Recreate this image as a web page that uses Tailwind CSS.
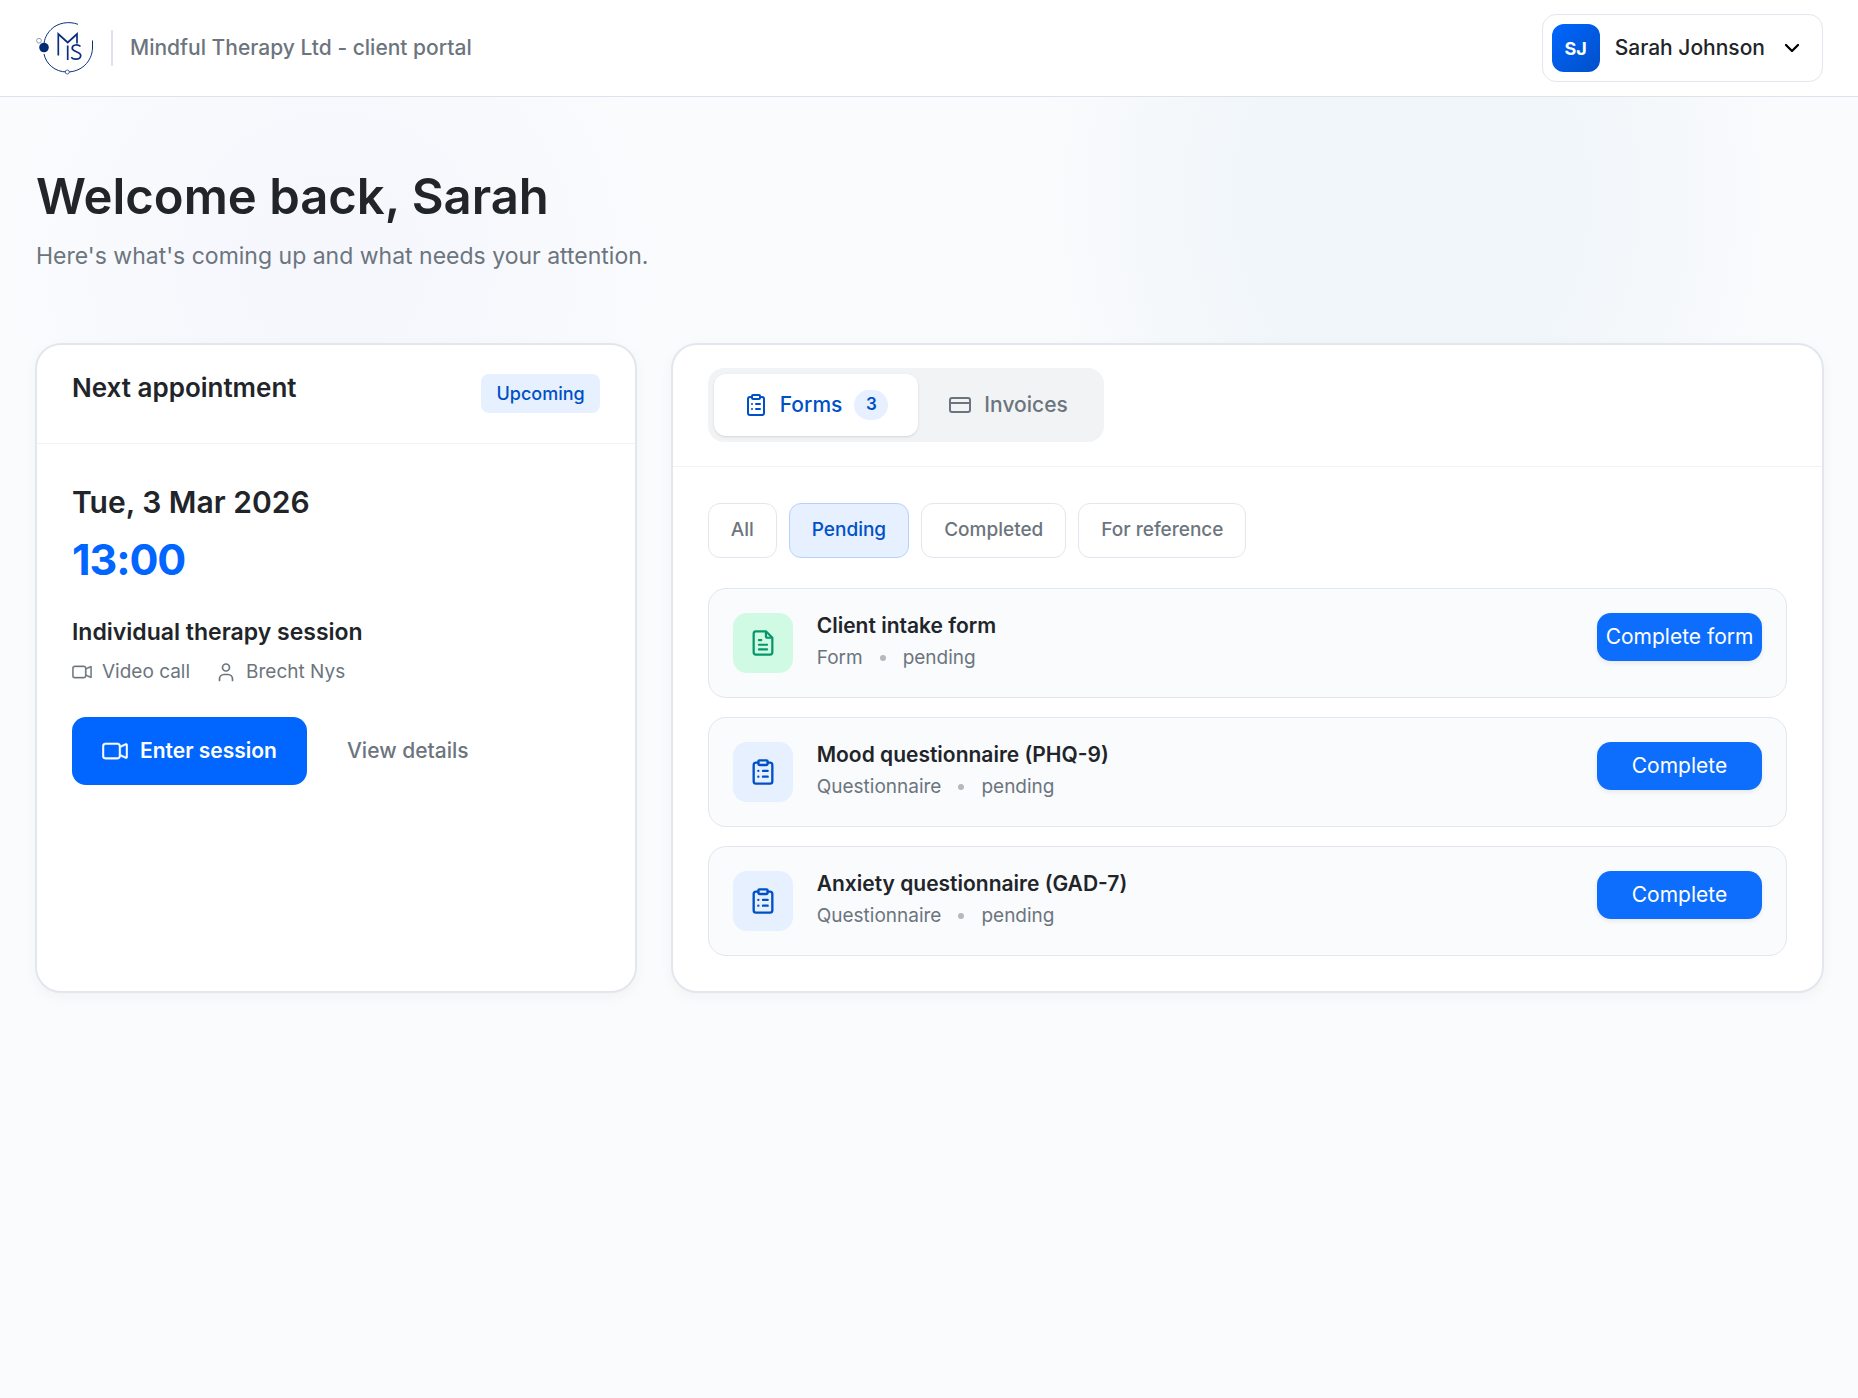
<!DOCTYPE html>
<html lang="en">
<head>
<meta charset="utf-8">
<meta name="viewport" content="width=device-width, initial-scale=1">
<title>Mindful Therapy Ltd - client portal</title>
<script src="https://cdn.jsdelivr.net/npm/@tailwindcss/browser@4"></script>
</head>
<body class="min-h-screen bg-[#fafbfd] font-['Inter',sans-serif] text-[#212529]">
<svg class="hidden" aria-hidden="true">
  <symbol id="video" viewBox="0 0 16 16" fill="currentColor" stroke="currentColor" stroke-width="0.300"><path fill-rule="evenodd" d="M0.200 5a2 2 0 0 1 2-2h7.300a2 2 0 0 1 1.983 1.738l3.110-1.382A.9 .9 0 0 1 15.800 4.269v7.462a.9 .9 0 0 1-1.206.913l-3.111-1.382A2 2 0 0 1 9.500 13H2.200a2 2 0 0 1-2-2zm11.300 5.175 3.300 1.456V4.369l-3.300 1.456zM2.200 4a1 1 0 0 0-1 1v6a1 1 0 0 0 1 1h7.300a1 1 0 0 0 1-1V5a1 1 0 0 0-1-1z"/></symbol>
  <symbol id="clipboard" viewBox="0 0 24 24" fill="none" stroke="currentColor" stroke-width="2" stroke-linecap="round" stroke-linejoin="round"><rect x="8" y="2" width="8" height="4" rx="1"/><path d="M16 4h2a2 2 0 0 1 2 2v14a2 2 0 0 1-2 2H6a2 2 0 0 1-2-2V6a2 2 0 0 1 2-2h2M12 11h4M12 16h4M8 11h.01M8 16h.01"/></symbol>
</svg>

<header class="flex h-[97px] items-center justify-between border-b border-[#dee2ec] bg-white px-[35px]">
  <div class="flex items-center">
    <svg class="h-14 w-[60px]" viewBox="0 0 60 56" fill="none" stroke="#0b2f7d" aria-label="Mindful Therapy logo" role="img">
      <path d="M43 4.300C34 1 23 2.500 16 9.500C11.500 14 9.500 19 9 24" stroke-width="1"/>
      <path d="M9 34C11 44 20 52 32 52C46 52 57 42 57.500 28V20.500" stroke-width="1"/>
      <circle cx="9" cy="27.500" r="4.800" fill="#002b73" stroke="none"/>
      <circle cx="4" cy="20.700" r="2.400" stroke="#7385b0" stroke-width="0.800"/>
      <circle cx="32.300" cy="52" r="2" fill="#fff" stroke-width="0.700"/>
      <path d="M23.300 35.500V14L32.700 22.500L42 14V23.500M32.700 25.500V40" stroke-width="1.700"/>
      <path d="M45.500 26.500C43 24 37.200 24.500 37.200 28.200C37.200 32 45.700 31.500 45.700 35.500C45.700 40 38.500 40 36.200 37.200" stroke-width="1.700"/>
    </svg>
    <span class="ml-4 h-9 w-0.5 bg-[#dee2ec]"></span>
    <span class="ml-[17px] text-[21px] font-medium text-[#6c757d]">Mindful Therapy Ltd - client portal</span>
  </div>
  <button class="flex h-[68px] items-center rounded-[14px] border border-[#e2e6ee] bg-white pr-[21px] pl-[9px]">
    <span class="flex size-12 items-center justify-center rounded-xl bg-linear-135 from-[#0066ff] to-[#0050c8] text-[18px] font-bold text-white">SJ</span>
    <span class="ml-[15px] text-[21px] font-medium">Sarah Johnson</span>
    <svg class="ml-[18px] size-[18px] text-black" viewBox="0 0 18 18" fill="none" stroke="currentColor" stroke-width="2.300" stroke-linecap="round" stroke-linejoin="round"><path d="M3 6l6 6 6-6"/></svg>
  </button>
</header>

<main>
  <section class="h-[246px] bg-[radial-gradient(ellipse_340px_340px_at_18%_70%,#f5f7fd,#f6f8fd_40%,transparent),radial-gradient(ellipse_380px_460px_at_76%_40%,#f0f6fa,#f1f6fa_45%,transparent)] px-9 pt-16">
    <h1 class="text-[49px] leading-[72px] font-semibold">Welcome back, Sarah</h1>
    <p class="mt-[5px] text-[23px] leading-9 text-[#6c757d]">Here's what's coming up and what needs your attention.</p>
  </section>

  <div class="grid grid-cols-[12fr_23fr] gap-[34px] pr-[34px] pl-[35px]">
    <section class="rounded-[26px] border-2 border-[#e3e7ed] bg-white shadow-[0_4px_14px_rgba(0,0,0,0.04)]">
      <div class="flex h-[99px] items-start justify-between border-b border-[#f1f3f5] px-[35px] pt-[29px]">
        <h2 class="text-[26px] leading-7 font-semibold">Next appointment</h2>
        <span class="rounded-lg bg-[#e6f0ff] px-[15px] py-1.5 text-[18px] leading-[27px] font-medium text-[#0050c8]">Upcoming</span>
      </div>
      <div class="px-[35px] pt-10">
        <div class="text-[30px] leading-9 font-semibold">Tue, 3 Mar 2026</div>
        <div class="mt-[13px] text-[43px] leading-[52px] font-bold tracking-tight text-[#0066ff]">13:00</div>
        <div class="mt-[29px] text-[23px] leading-9 font-semibold">Individual therapy session</div>
        <div class="mt-1 flex items-center text-[19px] leading-9 text-[#6c757d]">
          <svg class="size-5"><use href="#video"/></svg>
          <span class="ml-2.5">Video call</span>
          <svg class="ml-[26px] size-5" viewBox="0 0 20 20" fill="none" stroke="currentColor" stroke-width="1.700" stroke-linecap="round"><circle cx="10" cy="5.500" r="3.500"/><path d="M3.500 18.500V17a4.500 4.500 0 0 1 4.500-4.500h4a4.500 4.500 0 0 1 4.500 4.500v1.500"/></svg>
          <span class="ml-2.5">Brecht Nys</span>
        </div>
        <div class="mt-[27px] flex items-center gap-10">
          <button class="flex h-[68px] items-center gap-3 rounded-[14px] bg-[#0066ff] px-[30px] text-[21px] font-semibold text-white"><svg class="size-[26px]"><use href="#video"/></svg>Enter session</button>
          <button class="text-[21px] font-medium text-[#6c757d]">View details</button>
        </div>
      </div>
    </section>

    <section class="rounded-[26px] border-2 border-[#e3e7ed] bg-white shadow-[0_4px_14px_rgba(0,0,0,0.04)]">
      <div class="border-b border-[#f1f3f5] px-[35px] pt-[23px] pb-6">
        <div class="flex h-[74px] w-fit rounded-2xl bg-[#f2f3f5] p-1.5 text-[21px] font-medium" role="tablist">
          <button role="tab" aria-selected="true" class="flex items-center rounded-xl bg-white px-[30px] text-[#0050c8] shadow">
            <svg class="size-6"><use href="#clipboard"/></svg>
            <span class="ml-3">Forms</span>
            <span class="ml-3 flex h-[30px] w-[34px] items-center justify-center rounded-full bg-[#e6f0ff] text-[17px] font-semibold">3</span>
          </button>
          <button role="tab" aria-selected="false" class="flex items-center px-[30px] text-[#6c757d]">
            <svg class="size-6" viewBox="0 0 24 24" fill="none" stroke="currentColor" stroke-width="2"><rect x="2" y="5" width="20" height="14" rx="2"/><path d="M2 10h20"/></svg>
            <span class="ml-3">Invoices</span>
          </button>
        </div>
      </div>
      <div class="px-[35px] pt-9 pb-[35px]">
        <div class="flex gap-3 text-[19px] font-medium text-[#6c757d]">
          <button class="h-[55px] rounded-xl border border-[#e2e6ee] px-[22px]">All</button>
          <button class="h-[55px] rounded-xl border border-[#b8d1fb] bg-[#e6f0ff] px-[22px] text-[#0050c8]">Pending</button>
          <button class="h-[55px] rounded-xl border border-[#e2e6ee] px-[22px]">Completed</button>
          <button class="h-[55px] rounded-xl border border-[#e2e6ee] px-[22px]">For reference</button>
        </div>
        <ul class="mt-[30px] flex flex-col gap-[19px]">
          <li class="flex items-start rounded-[18px] border border-[#e2e6ee] bg-[#fafbfd] p-6">
            <span class="flex size-[60px] items-center justify-center rounded-[14px] bg-[#d1fae5] text-[#059669]">
              <svg class="size-[28px]" viewBox="0 0 24 24" fill="none" stroke="currentColor" stroke-width="1.900" stroke-linecap="round" stroke-linejoin="round"><path d="M14.500 2H6a2 2 0 0 0-2 2v16a2 2 0 0 0 2 2h12a2 2 0 0 0 2-2V7.500zM14.500 2v4a1.500 1.500 0 0 0 1.500 1.500h4M8.500 9.500h2M8.500 13.500h7M8.500 17.500h7"/></svg>
            </span>
            <div class="ml-6 flex-1">
              <h3 class="text-[21px] leading-[26px] font-semibold">Client intake form</h3>
              <p class="mt-1 flex items-center text-[19px] leading-[30px] text-[#6c757d]">Form<span class="mx-[17px] size-1.5 rounded-full bg-[#b4b9bd]"></span>pending</p>
            </div>
            <button class="h-12 w-[165px] rounded-[14px] bg-[#0d6efd] text-[21px] text-white shadow-[0_2px_5px_rgba(0,0,0,0.08)]">Complete form</button>
          </li>
          <li class="flex items-start rounded-[18px] border border-[#e2e6ee] bg-[#fafbfd] p-6">
            <span class="flex size-[60px] items-center justify-center rounded-[14px] bg-[#e6f0ff] text-[#0050c8]"><svg class="size-[28px]"><use href="#clipboard"/></svg></span>
            <div class="ml-6 flex-1">
              <h3 class="text-[21px] leading-[26px] font-semibold">Mood questionnaire (PHQ-9)</h3>
              <p class="mt-1 flex items-center text-[19px] leading-[30px] text-[#6c757d]">Questionnaire<span class="mx-[17px] size-1.5 rounded-full bg-[#b4b9bd]"></span>pending</p>
            </div>
            <button class="h-12 w-[165px] rounded-[14px] bg-[#0d6efd] text-[21px] text-white shadow-[0_2px_5px_rgba(0,0,0,0.08)]">Complete</button>
          </li>
          <li class="flex items-start rounded-[18px] border border-[#e2e6ee] bg-[#fafbfd] p-6">
            <span class="flex size-[60px] items-center justify-center rounded-[14px] bg-[#e6f0ff] text-[#0050c8]"><svg class="size-[28px]"><use href="#clipboard"/></svg></span>
            <div class="ml-6 flex-1">
              <h3 class="text-[21px] leading-[26px] font-semibold">Anxiety questionnaire (GAD-7)</h3>
              <p class="mt-1 flex items-center text-[19px] leading-[30px] text-[#6c757d]">Questionnaire<span class="mx-[17px] size-1.5 rounded-full bg-[#b4b9bd]"></span>pending</p>
            </div>
            <button class="h-12 w-[165px] rounded-[14px] bg-[#0d6efd] text-[21px] text-white shadow-[0_2px_5px_rgba(0,0,0,0.08)]">Complete</button>
          </li>
        </ul>
      </div>
    </section>
  </div>
</main>
</body>
</html>
